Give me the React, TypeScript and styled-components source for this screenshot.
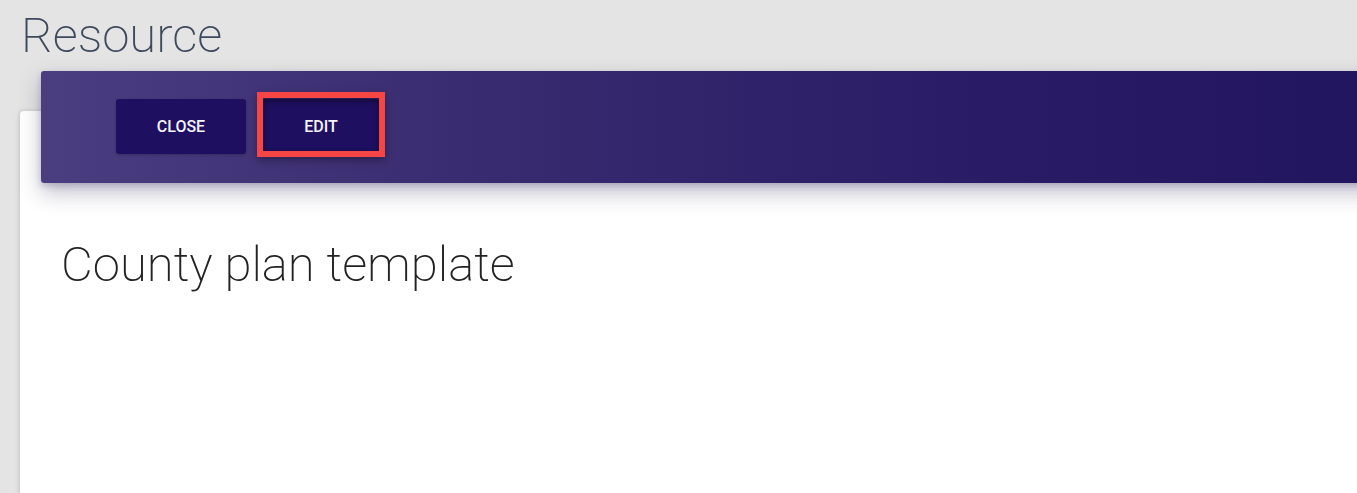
import React from "react";
import styled, { createGlobalStyle } from "styled-components";

const Global = createGlobalStyle`
  html, body { margin: 0; padding: 0; }
  body {
    background: #e4e4e4;
    font-family: Roboto, "Noto Sans", Arial, sans-serif;
    overflow: hidden;
    width: 1357px;
    height: 493px;
  }
`;

const Page = styled.div`
  display: flex;
  flex-direction: column;
  width: 1357px;
  height: 493px;
  overflow: hidden;
`;

const PageTitle = styled.h1`
  margin: 0;
  padding: 7px 0 0 21px;
  font-size: 49px;
  font-weight: 200;
  line-height: 58px;
  color: #3e4a5c;
  letter-spacing: 0;
`;

const Stage = styled.div`
  display: flex;
  flex-direction: column;
  padding-left: 20px;
  margin-top: 6px;
`;

const Toolbar = styled.div`
  position: relative;
  z-index: 2;
  margin-left: 21px;
  width: 1400px;
  height: 112px;
  box-sizing: border-box;
  border-radius: 3px;
  background: linear-gradient(90deg, #4a3d80 0%, #3a2c70 30%, #2a1c66 65%, #21145f 100%);
  box-shadow: 0 10px 22px rgba(40, 30, 80, 0.28), 0 3px 6px rgba(40, 30, 80, 0.2);
  display: flex;
  align-items: flex-start;
  gap: 17px;
  padding: 28px 0 0 75px;
`;

const ButtonWrap = styled.div`
  position: relative;
`;

const ActionButton = styled.button<{ $w: number }>`
  width: ${(p) => p.$w}px;
  height: 55px;
  border: none;
  border-radius: 3px;
  background: #1f0f60;
  color: #f4f2fa;
  font-family: Roboto, Arial, sans-serif;
  font-weight: 500;
  font-size: 16px;
  letter-spacing: 0;
  text-transform: uppercase;
  cursor: pointer;
  box-shadow: 0 1px 3px rgba(0, 0, 0, 0.2);
`;

const Highlight = styled.div`
  position: absolute;
  left: -6px;
  top: -7px;
  right: -6px;
  bottom: -3px;
  border: 6px solid #f54545;
  box-shadow: 0 3px 8px rgba(0, 0, 0, 0.35), inset 0 3px 6px rgba(0, 0, 0, 0.45);
  pointer-events: none;
`;

const Card = styled.div`
  position: relative;
  z-index: 1;
  margin-top: -72px;
  width: 1400px;
  height: 420px;
  background: #ffffff;
  border-radius: 4px;
  box-shadow: -1px 0 4px rgba(0, 0, 0, 0.15);
  padding: 126px 0 0 41px;
  box-sizing: border-box;
`;

const Heading = styled.h2`
  margin: 0;
  font-size: 49px;
  font-weight: 200;
  line-height: 56px;
  color: #222222;
`;

export default function App() {
  return (
    <>
      <Global />
      <Page>
        <PageTitle>Resource</PageTitle>
        <Stage>
          <Toolbar>
            <ActionButton $w={130}>Close</ActionButton>
            <ButtonWrap>
              <ActionButton $w={116}>Edit</ActionButton>
              <Highlight />
            </ButtonWrap>
          </Toolbar>
          <Card>
            <Heading>County plan template</Heading>
          </Card>
        </Stage>
      </Page>
    </>
  );
}
